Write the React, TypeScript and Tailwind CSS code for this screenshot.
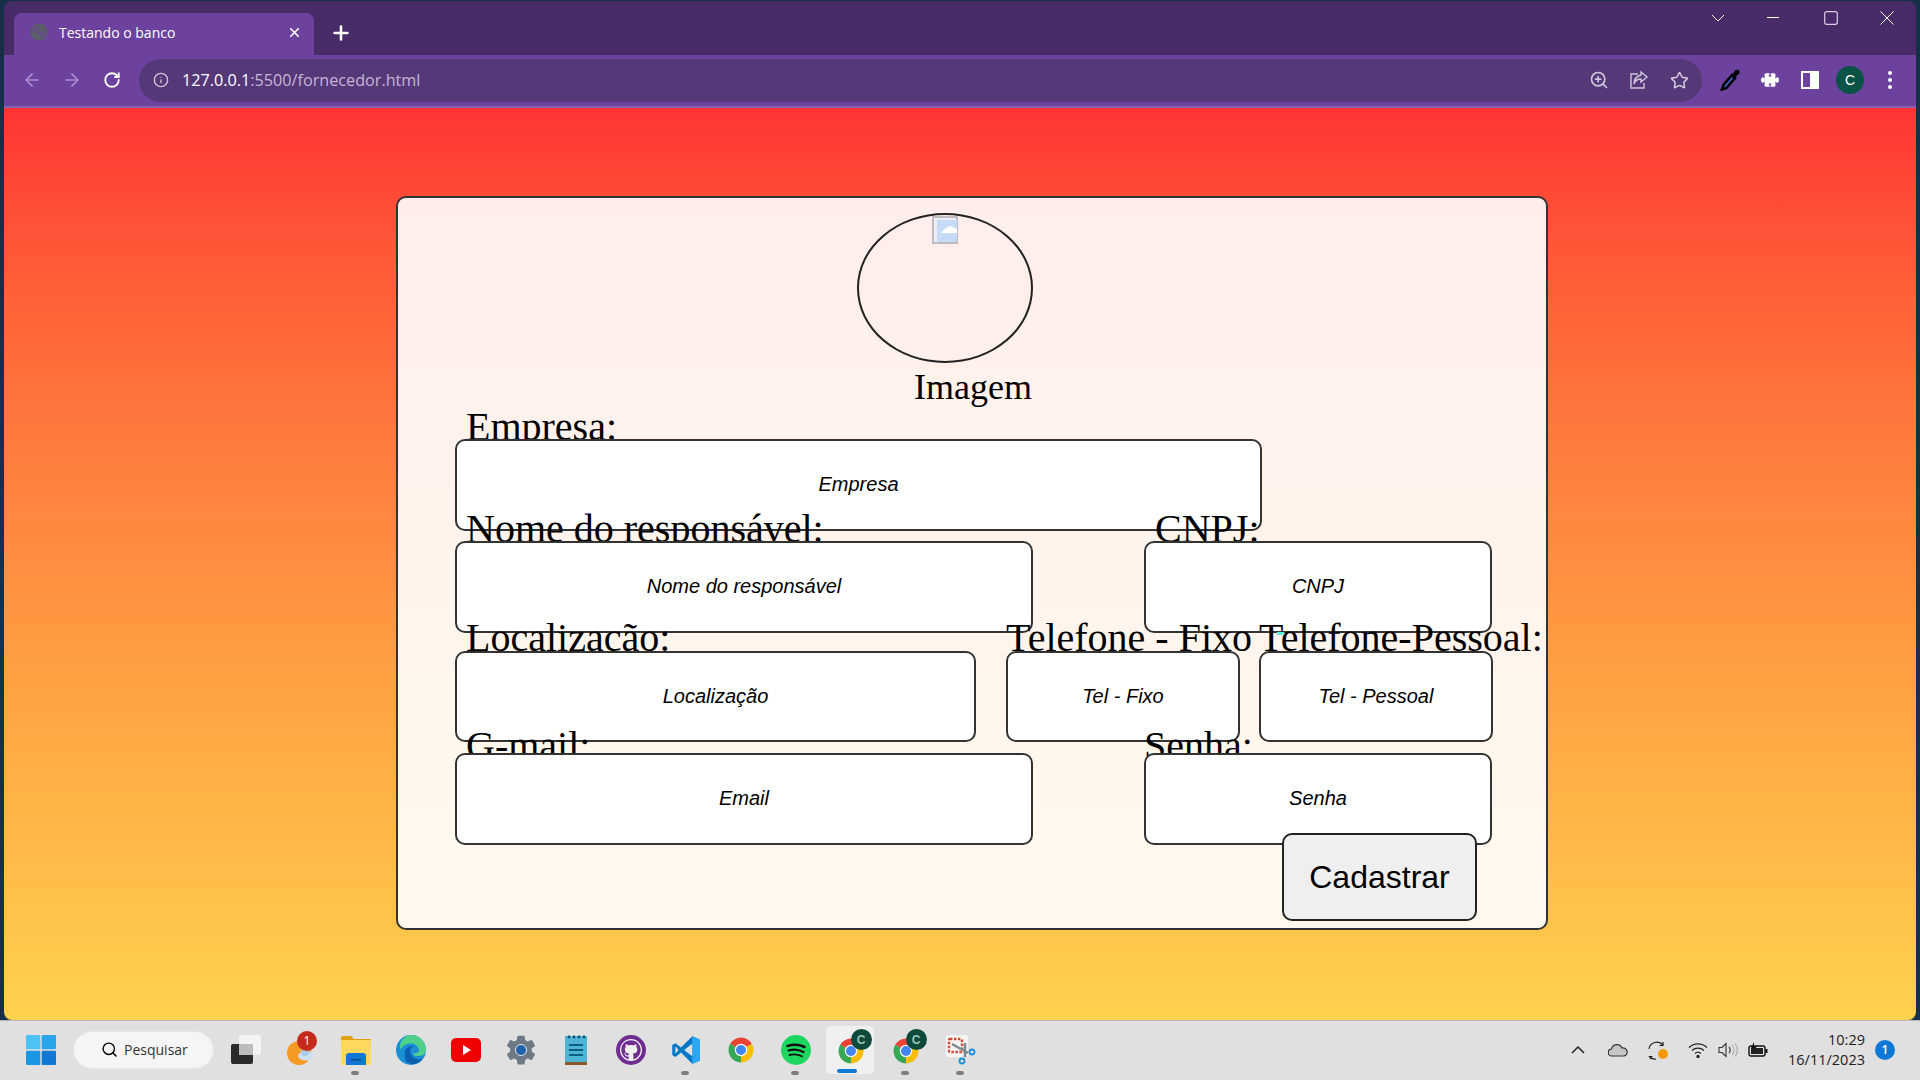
import { ArrowLeft, ArrowRight, RotateCw, Info, ZoomIn, Star, Search, X, Plus } from "lucide-react";
import { FaGithub } from "react-icons/fa";
import { BsPuzzleFill } from "react-icons/bs";
import { IoSettingsSharp } from "react-icons/io5";

const ui = "font-['Open_Sans',sans-serif]";

function Chrome({ size = 30 }: { size?: number }) {
  return (
    <svg width={size} height={size} viewBox="0 0 48 48">
      <path d="M24 24L6.7 14A20 20 0 0 1 41.3 14Z" fill="#ea4335" />
      <path d="M24 24L41.3 14A20 20 0 0 1 24 44Z" fill="#fbbc04" />
      <path d="M24 24L24 44A20 20 0 0 1 6.7 14Z" fill="#34a853" />
      <circle cx="24" cy="24" r="10" fill="#fff" />
      <circle cx="24" cy="24" r="8" fill="#4285f4" />
    </svg>
  );
}

function ChromeBadge() {
  return (
    <div className="relative w-[30px] h-[30px] mt-[3px]">
      <Chrome />
      <div className="absolute -top-[7px] left-[15px] w-[21px] h-[21px] rounded-full bg-[#0d4a3c] text-[#9fc5b8] text-[12px] font-bold flex items-center justify-center font-['Liberation_Sans',sans-serif]">
        C
      </div>
    </div>
  );
}

function Tile({ children, dot, active }: { children: React.ReactNode; dot?: boolean; active?: boolean }) {
  return (
    <div className="relative w-[55px] h-full flex items-center justify-center shrink-0 pb-[2px]">
      {active && <div className="absolute left-[3px] top-[5px] w-[48px] h-[48px] rounded-[5px] bg-[#f0f0f0]" />}
      <div className="relative">{children}</div>
      {dot && <div className="absolute bottom-[5px] left-[23px] w-[8px] h-[4px] rounded-full bg-[#7f7f7f]" />}
      {active && <div className="absolute bottom-[7px] left-[14px] w-[20px] h-[4px] rounded-full bg-[#0f78d4]" />}
    </div>
  );
}

function Field({
  label,
  placeholder,
  width,
  labelClass,
  height,
}: {
  label: string;
  placeholder: string;
  width: string;
  labelClass: string;
  height: string;
}) {
  return (
    <div className={`flex flex-col ${width}`}>
      <label className={`block whitespace-nowrap text-[40px] leading-[46px] h-[46px] text-black font-['Liberation_Serif',serif] ${labelClass}`}>
        {label}
      </label>
      <input
        placeholder={placeholder}
        className={`block w-full ${height} pb-[1px] bg-white border-2 border-[#333333] rounded-[10px] text-center italic text-[20px] font-['Liberation_Sans',sans-serif] placeholder:text-black outline-none`}
      />
    </div>
  );
}

export default function App() {
  return (
    <div className="w-screen h-screen overflow-hidden bg-[#16304a] flex flex-col">
      <div className="ml-[4px] w-[1912px] h-[1020px] flex flex-col shrink-0 mt-0">
        {/* title bar */}
        <div className="h-[54px] bg-[#472c68] rounded-t-[8px] flex items-end pl-[10px] mt-px shrink-0">
          <div className={`w-[300px] h-[42px] bg-[#6c429e] rounded-t-[8px] flex items-center pl-[16px] pr-[12px] pb-[4px] ${ui}`}>
            <svg width="18" height="18" viewBox="0 0 18 18">
              <circle cx="9" cy="9" r="8.5" fill="#5b5f66" />
              <path d="M6 2l4 2-2 3 3 2 5-1-2 6-4 2 0-4-3-2-5-1 1-5z" fill="#6c429e" opacity=".5" />
            </svg>
            <span className="ml-[11px] text-[14px] text-white">Testando o banco</span>
            <X size={15} strokeWidth={2.5} className="ml-auto text-white" />
          </div>
          <Plus size={22} strokeWidth={2.8} className="text-white ml-[16px] mb-[11px]" />
          <div className="ml-auto flex items-start self-start mt-[10px] text-white pr-[1px]">
            <div className="w-[49px] flex justify-center">
              <svg width="14" height="14" viewBox="0 0 14 14" fill="none" stroke="#fff"><path d="M1 4l6 6 6-6" /></svg>
            </div>
            <div className="w-[61px] flex justify-center">
              <svg width="14" height="14" viewBox="0 0 14 14" fill="none" stroke="#fff"><path d="M1 6.5h12" /></svg>
            </div>
            <div className="w-[55px] flex justify-center">
              <svg width="14" height="14" viewBox="0 0 14 14" fill="none" stroke="#d8cfe4" strokeWidth="1.2"><rect x=".7" y=".7" width="12.6" height="12.6" rx="2" /></svg>
            </div>
            <div className="w-[57px] flex justify-center">
              <svg width="14" height="14" viewBox="0 0 14 14" fill="none" stroke="#fff"><path d="M.5.5l13 13M13.5.5l-13 13" /></svg>
            </div>
          </div>
        </div>
        {/* toolbar */}
        <div className="h-[53px] bg-[#6c429e] border-b-[2px] border-[#8560b0] flex items-center pl-[8px] pb-[1px] shrink-0">
          <div className="w-10 flex justify-center"><ArrowLeft size={20} className="text-[#a88fc8]" /></div>
          <div className="w-10 flex justify-center"><ArrowRight size={20} className="text-[#a88fc8]" /></div>
          <div className="w-10 flex justify-center"><RotateCw size={18} strokeWidth={2.4} className="text-white" /></div>
          <div className={`ml-[7px] w-[1563px] h-[43px] rounded-full bg-[#553878] flex items-center pl-[14px] pr-[3px] ${ui}`}>
            <Info size={16} className="text-[#cfc6da]" />
            <span className="ml-[13px] text-[16.2px]">
              <span className="text-white">127.0.0.1</span>
              <span className="text-[#c4b6d6]">:5500/fornecedor.html</span>
            </span>
            <div className="ml-auto w-10 flex justify-center"><ZoomIn size={20} className="text-[#cfc6da]" /></div>
            <div className="w-10 flex justify-center">
              <svg width="20" height="20" viewBox="0 0 20 20" fill="none" stroke="#cfc6da" strokeWidth="1.4">
                <path d="M9 4H2v14h13v-5" />
                <path d="M12 2l6 5-6 5V9C8 9 6 11 5 14c0-5 3-8 7-9z" />
              </svg>
            </div>
            <div className="w-10 flex justify-center"><Star size={19} strokeWidth={1.8} className="text-[#d8d0e2]" /></div>
          </div>
          <div className="ml-[8px] w-10 flex justify-center">
            <svg width="20" height="22" viewBox="0 0 20 22">
              <path d="M12 6L3.500 16 2 20.500l4.500-1.500L15 9z" fill="#4263c7" stroke="#000" strokeWidth="2.600" />
              <path d="M10 6l3-1 2-3.500c1-1 3-1 4 0s.8 2.500-.2 3.500L16 7.500l-.5 3z" fill="#000" />
            </svg>
          </div>
          <div className="w-10 flex justify-center"><BsPuzzleFill size={18} className="text-white" /></div>
          <div className="w-10 flex justify-center">
            <div className="w-[18px] h-[18px] border-2 border-white flex justify-end bg-[#6c429e]"><div className="w-[7px] bg-white" /></div>
          </div>
          <div className="w-10 flex justify-center">
            <div className="w-[28px] h-[28px] rounded-full bg-[#0b5345] text-white text-[14px] flex items-center justify-center font-['Liberation_Sans',sans-serif]">C</div>
          </div>
          <div className="w-10 flex flex-col items-center gap-[3px]">
            <div className="w-[4px] h-[4px] rounded-full bg-white" />
            <div className="w-[4px] h-[4px] rounded-full bg-white" />
            <div className="w-[4px] h-[4px] rounded-full bg-white" />
          </div>
        </div>
        {/* page */}
        <div className="flex-1 rounded-b-[8px] bg-gradient-to-b from-[#ff3333] to-[#ffd24d] pt-[88px] pl-[392px] overflow-hidden">
          <div className="relative w-[1152px] h-[734px] bg-white/90 border-2 border-[#333333] rounded-[10px] flex flex-col pl-[57px]">
            <div className="-ml-[57px] pt-[15px] flex flex-col">
              <div className="ml-[459px] w-[176px] h-[150px] rounded-[50%] border-2 border-[#222222] flex justify-center items-start">
                <svg width="26" height="28" viewBox="0 0 26 28" className="mt-[1px]">
                  <rect x="1" y="1" width="24" height="26" fill="#eeeef2" stroke="#bcbcc2" strokeWidth="2" />
                  <rect x="5" y="4" width="20" height="22" fill="#c6dbf7" />
                  <path d="M9 17c2-4 7-7 10-7l6 3v4z" fill="#fff" />
                </svg>
              </div>
              <div className="mt-[4px] ml-[2px] h-[41px] text-center text-[36px] leading-[41px] text-black font-['Liberation_Serif',serif]">Imagem</div>
            </div>

            <div className="flex -mt-[4px]">
              <Field label="Empresa:" placeholder="Empresa" width="w-[807px]" labelClass="ml-[11px] -mb-[11px]" height="h-[92px]" />
            </div>
            <div className="flex gap-[111px] -mt-[25px]">
              <Field label="Nome do responsável:" placeholder="Nome do responsável" width="w-[578px]" labelClass="ml-[11px] -mb-[11px]" height="h-[92px]" />
              <Field label="CNPJ:" placeholder="CNPJ" width="w-[348px]" labelClass="ml-[11px] -mb-[11px]" height="h-[92px]" />
            </div>
            <div className="flex -mt-[18px]">
              <Field label="Localização:" placeholder="Localização" width="w-[521px]" labelClass="ml-[11px] -mb-[10px]" height="h-[91px]" />
              <div className="w-[30px]" />
              <Field label="Telefone - Fixo" placeholder="Tel - Fixo" width="w-[234px]" labelClass="-mb-[10px]" height="h-[91px]" />
              <div className="w-[19px]" />
              <Field label="Telefone-Pessoal:" placeholder="Tel - Pessoal" width="w-[234px]" labelClass="-mb-[10px]" height="h-[91px]" />
            </div>
            <div className="flex gap-[111px] -mt-[19px]">
              <Field label="G-mail:" placeholder="Email" width="w-[578px]" labelClass="ml-[11px] -mb-[16px]" height="h-[92px]" />
              <Field label="Senha:" placeholder="Senha" width="w-[348px]" labelClass="-mb-[16px]" height="h-[92px]" />
            </div>
            <button className="relative self-end mr-[69px] -mt-[12px] w-[195px] h-[88px] bg-[#efefef] border-2 border-[#222222] rounded-[10px] text-[32px] text-black font-['Liberation_Sans',sans-serif] pb-[1px]">
              Cadastrar
            </button>
            <div className="absolute left-[879px] top-[434px] w-[7px] h-[3px] bg-[#5ff0e0]" />
          </div>
        </div>
      </div>
      {/* taskbar */}
      <div className={`h-[60px] bg-[#e0e0e0] border-t border-[#b8b8b8] flex items-center ${ui}`}>
        <div className="w-[55px] ml-[13px] flex justify-center pb-[2px]">
          <svg width="30" height="30" viewBox="0 0 30 30">
            <rect x="0" y="0" width="14.3" height="14.3" rx="1" fill="#4cc2f5" />
            <rect x="15.7" y="0" width="14.3" height="14.3" rx="1" fill="#2aa5ec" />
            <rect x="0" y="15.7" width="14.3" height="14.3" rx="1" fill="#1a96e5" />
            <rect x="15.7" y="15.7" width="14.3" height="14.3" rx="1" fill="#0f78d4" />
          </svg>
        </div>
        <div className="ml-[5px] mb-[2px] w-[141px] h-[38px] rounded-full bg-[#f5f5f5] border border-[#e6e6e6] flex items-center pl-[27px]">
          <Search size={17} strokeWidth={2} className="text-black" />
          <span className="ml-[6px] text-[14px] text-[#333333]">Pesquisar</span>
        </div>
        <div className="ml-[4px] flex h-full">
          <Tile>
            <svg width="30" height="29" viewBox="0 0 30 29">
              <rect x="0" y="9" width="22" height="20" rx="2" fill="#2a2a2a" />
              <rect x="8" y="0" width="22" height="20" rx="2" fill="#f7f7f7" opacity=".85" />
              <rect x="8" y="9" width="14" height="11" fill="#bdbdbd" />
            </svg>
          </Tile>
          <Tile>
            <div className="relative w-[30px] h-[30px] ml-[3px]">
              <svg width="30" height="30" viewBox="0 0 30 30">
                <circle cx="12" cy="18" r="12" fill="#f59a23" />
                <ellipse cx="19" cy="21" rx="8" ry="4.5" fill="#cfe0f5" />
                <circle cx="18" cy="17" r="4" fill="#a9c8ee" />
              </svg>
              <div className="absolute -top-[4px] left-[10px] w-[20px] h-[20px] rounded-full bg-[#c42b1c] text-white text-[12px] flex items-center justify-center">1</div>
            </div>
          </Tile>
          <Tile dot>
            <svg width="30" height="30" viewBox="0 0 30 30">
              <path d="M0 3a2 2 0 0 1 2-2h8l3 3h17v8H0z" fill="#e0a010" />
              <rect x="0" y="5" width="30" height="25" rx="1" fill="#ffd75e" />
              <path d="M5 30V21a3 3 0 0 1 3-3h14a3 3 0 0 1 3 3v9z" fill="#0f78d4" />
              <rect x="10" y="24" width="10" height="1.5" fill="#0a4f8c" />
            </svg>
          </Tile>
          <Tile>
            <svg width="30" height="30" viewBox="0 0 30 30">
              <circle cx="15" cy="15" r="15" fill="#1b8fd6" />
              <path d="M15 0a15 15 0 0 1 15 15c0 4-4 6-9 6-3 0-4-1-4-3 4 1 7-1 6-4C21 7 9 6 4 15 3 7 8 0 15 0z" fill="#4fd08a" />
              <path d="M9 18c0-5 5-8 9-7-4 1-5 6-2 10 3 4 8 4 11 2-4 7-13 8-17 3-1-2-1-5-1-8z" fill="#0b5fae" />
            </svg>
          </Tile>
          <Tile>
            <svg width="30" height="24" viewBox="0 0 30 24">
              <rect width="30" height="24" rx="5" fill="#f00000" />
              <path d="M12 7l8 5-8 5z" fill="#fff" />
            </svg>
          </Tile>
          <Tile>
            <div className="relative w-[32px] h-[32px]">
              <IoSettingsSharp size={32} className="text-[#6d7a85]" />
              <div className="absolute left-[10px] top-[10px] w-[12px] h-[12px] rounded-full bg-[#1f62ab] border border-[#e6e9ee]" />
            </div>
          </Tile>
          <Tile>
            <svg width="22" height="30" viewBox="0 0 22 30">
              <rect y="1" width="22" height="28" fill="#4db4d6" />
              <rect y="27" width="22" height="3" fill="#8a5a2b" />
              <rect x="4" y="9" width="14" height="2" fill="#0d5f80" />
              <rect x="4" y="14" width="14" height="2" fill="#0d5f80" />
              <rect x="4" y="19" width="14" height="2" fill="#0d5f80" />
              <circle cx="4" cy="2" r="1.4" fill="#0d4f6c" />
              <circle cx="9" cy="2" r="1.4" fill="#0d4f6c" />
              <circle cx="14" cy="2" r="1.4" fill="#0d4f6c" />
              <circle cx="19" cy="2" r="1.4" fill="#0d4f6c" />
            </svg>
          </Tile>
          <Tile>
            <div className="w-[30px] h-[30px] rounded-full bg-[#f0f0f0] border-[4px] border-[#6f2c91] flex items-center justify-center">
              <FaGithub size={20} className="text-[#6f2c91]" />
            </div>
          </Tile>
          <Tile dot>
            <svg width="30" height="30" viewBox="0 0 48 48">
              <path d="M34 2L16 20 7 13l-5 3v16l5 3 9-7 18 18 12-5V7z" fill="#0078c8" />
              <path d="M34 2l12 5v34l-12 5z" fill="#2aa8f2" />
              <path d="M34 14v20L21 24z" fill="#e0e0e0" />
              <path d="M7 18l5 6-5 6z" fill="#e0e0e0" />
            </svg>
          </Tile>
          <Tile><Chrome /></Tile>
          <Tile dot>
            <svg width="30" height="30" viewBox="0 0 30 30" fill="none" stroke="#111" strokeLinecap="round">
              <circle cx="15" cy="15" r="15" fill="#1ed760" stroke="none" />
              <path d="M6.5 11c6-2 12-1.500 17 1" strokeWidth="2.6" />
              <path d="M7.5 15.500c5-1.500 10.500-1 15 1.500" strokeWidth="2.2" />
              <path d="M8.500 20c4.500-1 8.500-.7 12.500 1.300" strokeWidth="1.8" />
            </svg>
          </Tile>
          <Tile active><ChromeBadge /></Tile>
          <Tile dot><ChromeBadge /></Tile>
          <Tile dot>
            <svg width="30" height="30" viewBox="0 0 30 30" fill="none">
              <rect x="0" y="0" width="22" height="22" rx="2" fill="#f4f4f4" />
              <rect x="3" y="4" width="13" height="13" rx="1" stroke="#d9452f" strokeWidth="2.400" strokeDasharray="2.400 1.600" />
              <path d="M6 9l16 9M19 8v14" stroke="#7d8790" strokeWidth="2.500" />
              <circle cx="26" cy="17" r="2.500" stroke="#1e90d8" strokeWidth="1.800" />
              <circle cx="16" cy="26" r="2.500" stroke="#1e90d8" strokeWidth="1.800" />
            </svg>
          </Tile>
        </div>
        <div className="ml-auto pr-[25px] pb-[2px] flex items-center">
          <div className="w-10 flex justify-center">
            <svg width="14" height="10" viewBox="0 0 14 10" fill="none" stroke="#222" strokeWidth="1.500"><path d="M1 8l6-6 6 6" /></svg>
          </div>
          <div className="w-10 flex justify-center">
            <svg width="20" height="14" viewBox="0 0 20 14">
              <path d="M4 13a3.500 3.500 0 0 1-.5-7A5.500 5.500 0 0 1 14 5a4 4 0 0 1 2 8z" fill="#c6c6c6" stroke="#333" strokeWidth="1.200" />
            </svg>
          </div>
          <div className="w-10 flex justify-center">
            <svg width="20" height="20" viewBox="0 0 20 20" fill="none" stroke="#222" strokeWidth="1.200">
              <path d="M1 9a8 8 0 0 1 14-4M15 2v3.500h-3.500" />
              <path d="M3 19l-1.500-2.500h3M2 17c2 2 4 2.500 6 2" />
              <circle cx="15" cy="14" r="5" fill="#f59a00" stroke="none" />
            </svg>
          </div>
          <div className="w-10 flex justify-center">
            <svg width="20" height="16" viewBox="0 0 20 16" fill="none" stroke="#222" strokeWidth="1.300">
              <path d="M1 5.500a13 13 0 0 1 18 0M4 8.500a9 9 0 0 1 12 0M7 11.500a4.500 4.500 0 0 1 6 0" />
              <circle cx="10" cy="14.500" r="1" fill="#222" />
            </svg>
          </div>
          <div className="w-5 flex justify-center">
            <svg width="20" height="16" viewBox="0 0 20 16" fill="none" stroke="#333" strokeWidth="1.100">
              <path d="M1 5.500h3l4-4v13l-4-4H1z" />
              <path d="M11 5c1.500 1.500 1.500 4.500 0 6" />
              <path d="M14 3c2.500 3 2.500 7 0 10M17 1.500c3 4 3 9 0 13" stroke="#aaa" />
            </svg>
          </div>
          <div className="w-10 flex justify-center">
            <svg width="20" height="16" viewBox="0 0 20 16">
              <rect x="1" y="4" width="16" height="10" rx="2" fill="none" stroke="#111" strokeWidth="1.400" />
              <rect x="3" y="6" width="12" height="6" fill="#222" />
              <rect x="17.500" y="7" width="2" height="4" fill="#111" />
              <path d="M6 0L3 6h3l-1 4 4-6H6z" fill="#111" />
            </svg>
          </div>
          <div className="w-[87px] flex flex-col items-end text-[14.5px] leading-[20px] text-[#222222]">
            <span>10:29</span>
            <span>16/11/2023</span>
          </div>
          <div className="ml-[10px] w-[20px] h-[20px] rounded-full bg-[#0f78d4] text-white text-[12px] font-semibold flex items-center justify-center">1</div>
        </div>
      </div>
    </div>
  );
}
